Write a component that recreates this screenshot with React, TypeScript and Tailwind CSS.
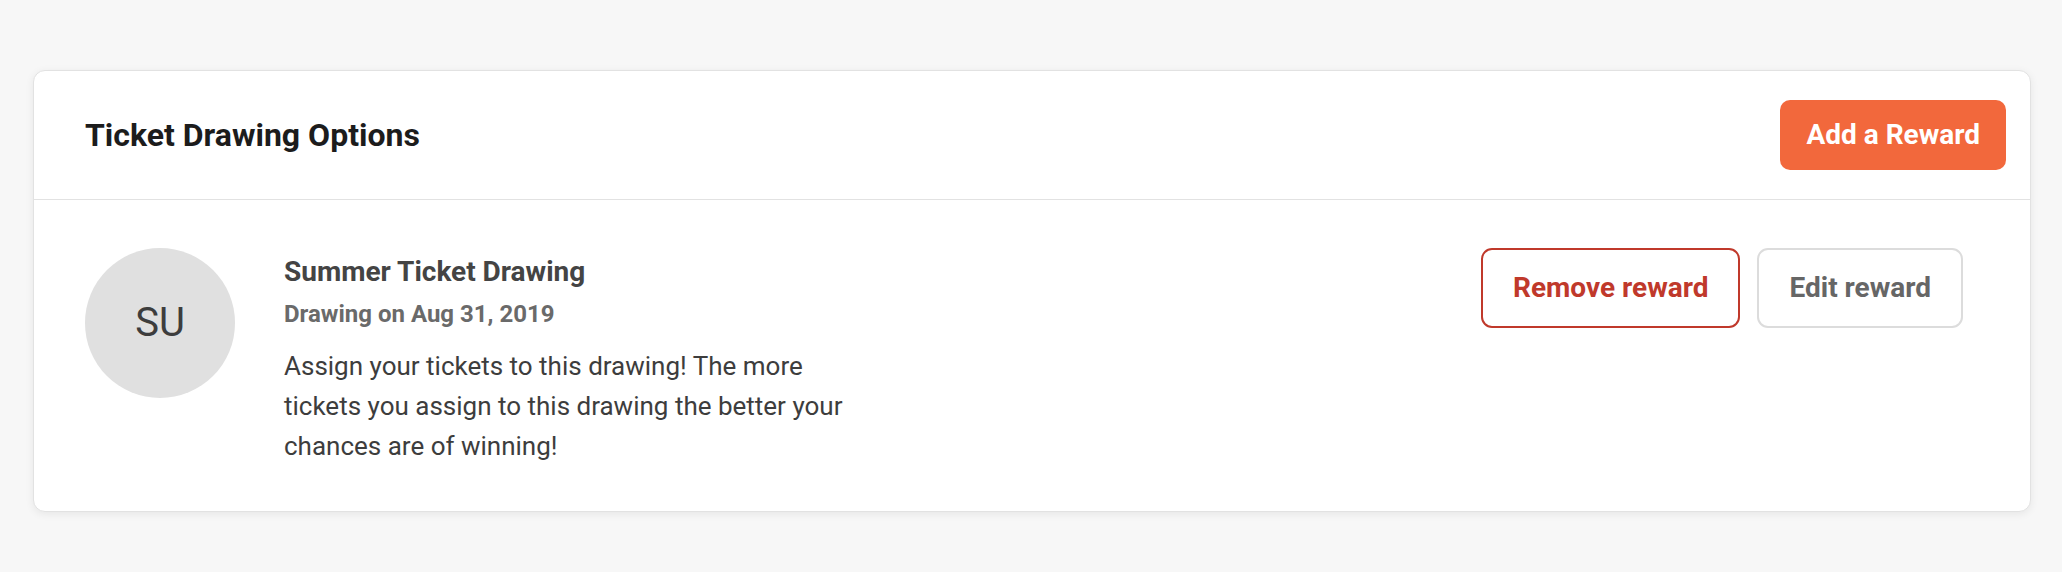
export default function App() {
  return (
    <div
      className="min-h-screen bg-[#f7f7f7] pl-[33px] pr-[31px] pt-[70px] pb-[60px]"
      style={{ fontFamily: "Roboto, 'Liberation Sans', sans-serif" }}
    >
      <div className="bg-white border border-[#e2e2e2] rounded-[12px] shadow-[0_2px_8px_rgba(0,0,0,0.07)]">
        <div className="flex items-center justify-between h-[129px] pl-[51px] pr-[24px] border-b border-[#e2e2e2]">
          <h2 className="text-[32px] font-bold text-[#1c1c1c]">Ticket Drawing Options</h2>
          <button className="h-[70px] px-[26px] rounded-[10px] bg-[#f2683c] text-white text-[28px] font-bold">
            Add a Reward
          </button>
        </div>
        <div className="flex items-start pl-[51px] pr-[67px] pt-[48px] pb-[45px]">
          <div className="w-[150px] h-[150px] rounded-full bg-[#e0e0e0] flex items-center justify-center shrink-0">
            <span className="text-[40px] text-[#3d3d3d]">SU</span>
          </div>
          <div className="ml-[49px] w-[575px] pt-[7px]">
            <div className="text-[28px] font-bold text-[#444] leading-[34px]">Summer Ticket Drawing</div>
            <div className="mt-[10px] text-[24px] font-bold text-[#6a6a6a] leading-[30px]">
              Drawing on Aug 31, 2019
            </div>
            <p className="mt-[17px] text-[26px] text-[#3d3d3d] leading-[40px]">
              Assign your tickets to this drawing! The more tickets you assign to this drawing the better your chances
              are of winning!
            </p>
          </div>
          <div className="flex-1" />
          <div className="flex gap-[17px]">
            <button className="h-[80px] px-[30px] rounded-[11px] border-2 border-[#c0392b] text-[#c0392b] text-[28px] font-bold">
              Remove reward
            </button>
            <button className="h-[80px] px-[30px] rounded-[11px] border-2 border-[#dcdcdc] text-[#666] text-[28px] font-bold">
              Edit reward
            </button>
          </div>
        </div>
      </div>
    </div>
  );
}
